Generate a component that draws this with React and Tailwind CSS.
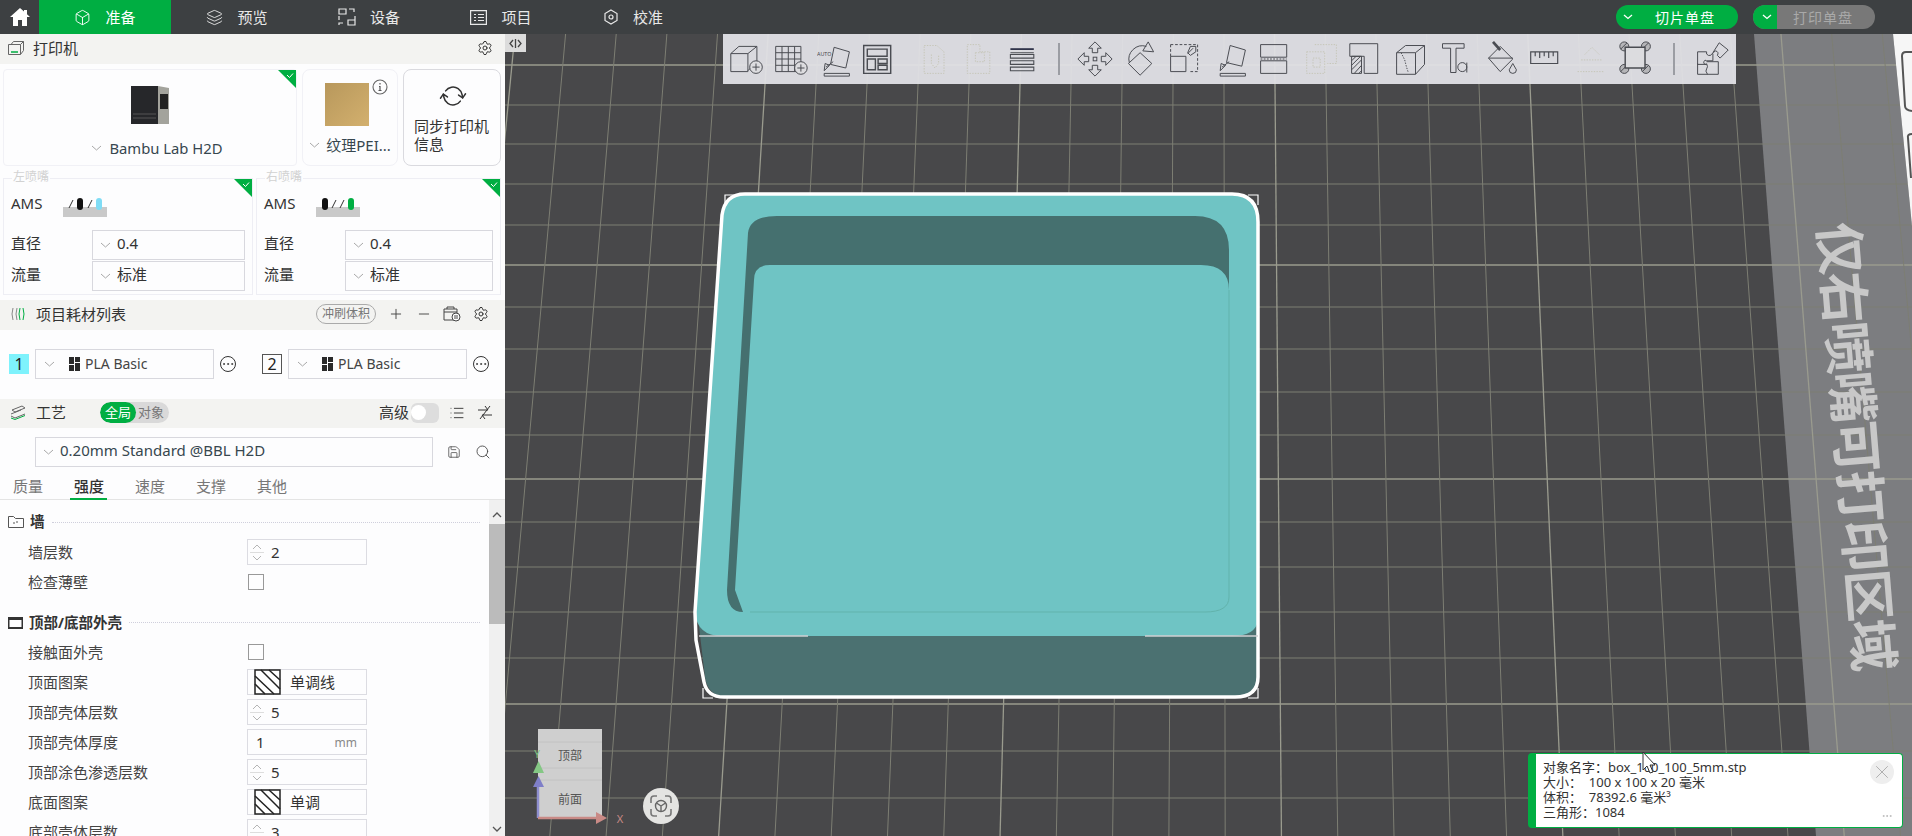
import React from 'react';
import { Box, Layers, Settings, Plus, Minus, Search, Save, RefreshCw, Ellipsis, List, X } from 'lucide-react';

const font = { fontFamily: '"Noto Sans", "Noto Sans CJK SC", sans-serif' };

// grid lines of the build plate, measured from the perspective of the scene
const rowYs = [65, 105, 144, 184, 225, 265, 307, 349, 392, 435, 479, 522, 567, 612, 658, 704, 751, 798];
const colNs = [];
for (let n = -14; n <= 22; n++) colNs.push(n);
const colX = (n, y) => {
  const a = 1020 + 51 * n;
  const b = 1003 + 55.5 * n;
  return a + ((b - a) * (y - 85)) / 640;
};

function Chevron({ className = '' }) {
  return (
    <svg width="11" height="6" viewBox="0 0 11 6" fill="none" className={`shrink-0 ${className}`}>
      <path d="M1 1l4.5 4L10 1" stroke="#a8a8a8" strokeWidth="1" />
    </svg>
  );
}

function Corner() {
  return (
    <svg width="18" height="18" viewBox="0 0 18 18" className="absolute top-0 right-0">
      <path d="M0 0h18v18z" fill="#00ae42" />
      <path d="M9 5l2.5 2.5L15 3.5" stroke="#fff" strokeWidth="1" fill="none" />
    </svg>
  );
}

function Scene() {
  return (
    <svg viewBox="505 34 1407 802" className="absolute inset-0 w-full h-full">
      <rect x="505" y="34" width="1407" height="802" fill="#48484a" />
      <path d="M1754 34L1893 34L1912 226L1912 836L1816 836Z" fill="#7c7d80" />
      {rowYs.map((y, i) => (
        <line key={y} x1="505" x2="1912" y1={y} y2={y} stroke={i % 5 === 0 ? '#9a9b8e' : '#7d7e73'} strokeWidth={i % 5 === 0 ? 1.3 : 1} />
      ))}
      {colNs.map((n) => (
        <line key={n} x1={colX(n, 34)} y1="34" x2={colX(n, 836)} y2="836" stroke={n % 5 === 0 ? '#9a9b8e' : '#7d7e73'} strokeWidth={n % 5 === 0 ? 1.3 : 1} />
      ))}
      <path d="M1893 34L1912 34L1912 226Z" fill="#f6f6f6" />
      <path d="M1912 52h-6q-4 0-4 4l3 50q0 4 7 5" fill="none" stroke="#555" strokeWidth="2" />
      <path d="M1912 134q-5 0-4 4l3 40" fill="none" stroke="#555" strokeWidth="2" />
      <text
        transform="translate(1819 224) rotate(85.3)"
        fontSize="52"
        fontWeight="700"
        fill="#c8c8c8"
        textLength="450"
        style={font}
      >
        仅右喷嘴可打印区域
      </text>

      {/* dark side of the box */}
      <path d="M697 610L705 677Q708 697 728 697L1235 697Q1258 697 1258 677L1258 600L1258 620Z" fill="#4b7171" />
      {/* top face */}
      <path d="M745 195L1232 195Q1258 195 1258 222L1258 620Q1256 636 1232 636L722 636Q697 636 695 612L722 215Q724 195 745 195Z" fill="#6fc4c4" />
      {/* recess */}
      <path d="M777 216L1195 216Q1229 216 1229 250L1229 290Q1229 265 1201 265L770 265Q754 265 754 280L735 590L743 612Q727 612 727 590L748 233Q750 216 777 216Z" fill="#45706f" />
      <path d="M1229 290L1229 597Q1229 612 1205 612L750 612" fill="none" stroke="#62b3ac" strokeWidth="1" />
      <path d="M745 194L1232 194Q1258 194 1258 222L1258 677Q1258 697 1235 697L724 697Q707 697 704 682L696 640L695 612L722 215Q725 194 745 194Z" fill="none" stroke="#fff" strokeWidth="3.5" />
      <path d="M699 636H808M1145 636H1258" stroke="#cfcfd2" strokeWidth="1.5" />
      <path d="M725 205V195H735M1248 195H1258V205M703 688V698H713M1248 698H1258V688" fill="none" stroke="#fff" strokeWidth="1.2" />

      {/* orientation widget */}
      <rect x="538" y="729" width="64" height="89" fill="#cfcfcf" />
      <path d="M538 742H602M538 768H602M538 780H602" stroke="#c2c2c2" />
      <text x="570" y="760" textAnchor="middle" fontSize="12" fill="#555" style={font}>顶部</text>
      <text x="570" y="804" textAnchor="middle" fontSize="12" fill="#555" style={font}>前面</text>
      <path d="M538 818V785" stroke="#8f8fd0" strokeWidth="2.5" />
      <path d="M533 787h11l-5.500-11z" fill="#7f7fc8" />
      <path d="M533 773h11l-5.500-12z" fill="#84c784" />
      <text x="537" y="758" textAnchor="middle" fontSize="10" fill="#84c784" style={font}>Y</text>
      <path d="M538 818H598" stroke="#c98a86" strokeWidth="2.5" />
      <path d="M596 812v12l11-6z" fill="#c98a86" />
      <text x="620" y="823" textAnchor="middle" fontSize="11" fill="#c98a86" style={font}>X</text>
      <circle cx="661" cy="806" r="18" fill="#e4e4e2" />
      <path d="M651 803v-4q0-3 3-3h3M665 796h3q3 0 3 3v4M671 809v4q0 3-3 3h-3M657 816h-3q-3 0-3-3v-4" fill="none" stroke="#777" strokeWidth="1.6" />
      <circle cx="661" cy="806" r="5.500" fill="none" stroke="#666" strokeWidth="1.4" />
      <path d="M661 806v5.500M661 806l-4.500-3M661 806l4.500-3" stroke="#666" strokeWidth="1.4" />
    </svg>
  );
}

const s = { fill: 'none', stroke: '#4a4c52', strokeWidth: 1.1 };
const off = { fill: 'none', stroke: '#c4c4b4', strokeWidth: 1, strokeDasharray: '1.5 1.5' };

const toolIcons = [
  <g {...s}><path d="M2 15h19v20H2zM2 15l9-8h20v17l-10 10M21 15l10-8" /><circle cx="30" cy="30" r="7" fill="#dcdcdf" /><path d="M30 26v8M26 30h8" /></g>,
  <g {...s}><path d="M3 7h28v28H3zM10 7v28M17 7v28M24 7v28M3 14h28M3 21h28M3 28h28" /><circle cx="31" cy="31" r="7" fill="#dcdcdf" /><path d="M31 27v8M27 31h8" /></g>,
  <g {...s}><path d="M19 8l17 5-4 18-17-4z" /><path d="M14 28l-6 6 1-8zM10 30l8-6M8 37h28v3H8z" /><text x="0" y="18" fontSize="6" fill="#45474c" stroke="none" style={font}>AUTO</text></g>,
  <g {...s} strokeWidth="1.6"><path d="M3 6h30v31H3zM7 10h22v8H7zM7 21h9v12H7zM19 21h10v5H19zM19 28h10v5H19z" /></g>,
  <g {...off}><path d="M8 6h14l8 7v24H8zM16 16v10l4 5 4-5V16" /></g>,
  <g {...off}><path d="M7 5h14v8h11v24H7zM16 14h10v10H16z" /></g>,
  <g {...s} strokeWidth="1.2"><path d="M6 10h26" stroke="#30344a" strokeWidth="2" /><path d="M6 14h26M6 16h26v4H6zM6 23h26v4H6zM6 30h26v4H6z" /></g>,
  null,
  <g {...s}><path d="M20 2l7 7h-4v5h-6V9h-4zM20 40l7-7h-4v-5h-6v5h-4zM1 21l7-7v4h5v6H8v4zM39 21l-7-7v4h-5v6h5v4z" /><rect x="18" y="19" width="4" height="4" /></g>,
  <g {...s}><path d="M7 25A15 15 0 0 1 26 7" /><path d="M28 2l6 11-12-1zM19 14l13 12-13 13-13-13z" /></g>,
  <g {...s}><path d="M4 5h30v30H24" strokeDasharray="3 2" /><path d="M4 5v13" strokeDasharray="3 2" /><path d="M4 18h17v17H4zM23 15l6-6M26 7h6v6l-6 4-3-3z" /></g>,
  <g {...s}><path d="M19 6l17 5-4 18-17-4z" /><path d="M14 28l-6 6 1-8zM10 30l8-6M8 37h28v3H8z" /></g>,
  <g {...s}><path d="M4 5h29v14H4zM4 23h29v14H4z" /><path d="M4 21h29" strokeDasharray="2 1.500" /></g>,
  <g {...off}><path d="M12 5h24v21H26M3 13h20v24H3zM10 20h8v10h-8z" /></g>,
  <g {...s}><path d="M2 4H33V37H18V18H2z" /><path d="M4 18h11v19H4zM4 23l5-5M4 28l10-10M4 33l11-11M7 37l8-9M12 37l3-3" /></g>,
  <g {...s}><path d="M4 14h21v24H4zM4 14l10-8h21v21l-10 11M25 14l10-8" /><path d="M9 14l4 8 2 8 2 6" strokeDasharray="1.500 1.500" /></g>,
  <g {...s}><path d="M5 4h24v5H20v27h-6V9H5z" /><circle cx="27" cy="30" r="5" /><path d="M32 25v11" /></g>,
  <g {...s}><path d="M5 20L18 7l14 14-14 14zM5 20h27" /><path d="M10 2l8 9" strokeWidth="3" /><path d="M32 26l4 7a4 4 0 0 1-8 0z" /></g>,
  <g {...s} strokeWidth="1.300"><path d="M3 13h30v13H3zM8 13v5M13 13v7M18 13v5M23 13v7M28 13v5" /></g>,
  <g {...off}><path d="M12 16l8-8 8 8M8 22h24M4 35h30" /></g>,
  <g {...s}><circle cx="7" cy="7" r="5" fill="#b5b5b8" /><circle cx="31" cy="7" r="5" fill="#b5b5b8" /><circle cx="7" cy="32" r="5" fill="#b5b5b8" /><circle cx="31" cy="32" r="5" fill="#b5b5b8" /><path d="M3 10l7-7M27 10l7-7M3 35l7-7M27 35l7-7" /><path d="M8 8h22v23H8z" strokeWidth="1.600" fill="#dcdcdf" /></g>,
  null,
  <g {...s}><path d="M4 13h10q-1 3 2 4t4-2l1 0v8h-7q-2-2-3 1t3 3H4zM14 24h13v14H4V26M14 26q2 4 0 6t1 6" /><path d="M21 14l7-11 10 8-9 9-3-3q2-4-2-5z" /></g>,
];

// margin before each toolbar cell, lined up with the reference
const toolCells = [
  '', '', '', '', 'ml-[12px]', '', '', 'sep', '', 'ml-[2px]', '', 'ml-[2px]', '', 'ml-[3px]', '', 'ml-px', 'ml-px', 'ml-[2px]', '', 'ml-[2px]', '', 'sep2', '',
];

function Toolbar() {
  return (
    <div className="absolute left-[218px] top-0 w-[1013px] h-[50px] bg-[#e2e2e6]/95 flex items-center pl-[2px]">
      {toolIcons.map((icon, i) => {
        const cell = toolCells[i];
        if (cell === 'sep') return <div key={i} className="w-[28px] flex justify-center"><div className="w-[1.500px] h-[32px] bg-[#9b9da3]" /></div>;
        if (cell === 'sep2') return <div key={i} className="w-[32px] flex justify-center"><div className="w-[1.500px] h-[32px] bg-[#9b9da3]" /></div>;
        return (
          <div key={i} className={`w-[44px] flex justify-center ${cell}`}>
            <svg width="36" height="40" viewBox="0 0 40 42">{icon}</svg>
          </div>
        );
      })}
    </div>
  );
}

function TopBar() {
  const tab = 'w-[132px] h-full flex items-center justify-center gap-[14px] text-[15px]';
  return (
    <div className="h-[34px] bg-[#3d4042] flex items-center text-[#e8e8e8] shrink-0" style={font}>
      <div className="w-[39px] flex justify-center">
        <svg width="20" height="20" viewBox="0 0 20 20" fill="#fff"><path d="M10 1L0 10h3v9h5v-6h4v6h5v-9h3l-3-2.700V3h-3v1.600z" /></svg>
      </div>
      <div className={`${tab} bg-[#00ae42] text-white`}><Box size={17} strokeWidth={1.3} />准备</div>
      <div className={tab}><Layers size={17} strokeWidth={1.3} />预览</div>
      <div className={tab}>
        <svg width="18" height="18" viewBox="0 0 18 18" fill="none" stroke="#e8e8e8" strokeWidth="1.2"><path d="M1 1h7v5H1zM1 8v4M1 17v-2h4M11 1h5v3M17 8v9h-7v-5h7" /></svg>
        设备
      </div>
      <div className={tab}>
        <svg width="17" height="15" viewBox="0 0 17 15" fill="none" stroke="#e8e8e8" strokeWidth="1.2"><path d="M.6.6h15.800v13.800H.6zM4 4.500h2M8 4.500h6M4 7.500h2M8 7.500h6M4 10.500h2M8 10.500h6" /></svg>
        项目
      </div>
      <div className={tab}>
        <svg width="16" height="16" viewBox="0 0 16 16" fill="none" stroke="#e8e8e8" strokeWidth="1.2"><path d="M8 1l6 3.500v7L8 15l-6-3.500v-7z" /><circle cx="8" cy="8" r="2" /></svg>
        校准
      </div>
      <div className="ml-auto flex items-center gap-[15px] pr-[37px]">
        <div className="w-[122px] h-[24px] rounded-full bg-[#00ae42] flex items-center text-white text-[14px]">
          <Chevron2 /><span className="ml-[22px] tracking-[1px]">切片单盘</span>
        </div>
        <div className="w-[122px] h-[24px] rounded-full bg-[#787878] flex items-center text-[#a9a9a9] text-[14px] overflow-hidden">
          <div className="w-[24px] h-full bg-[#00ae42] flex items-center pl-[2px]"><Chevron2 /></div>
          <span className="ml-[16px] tracking-[1px]">打印单盘</span>
        </div>
      </div>
    </div>
  );
}

function Chevron2() {
  return (
    <svg width="10" height="6" viewBox="0 0 10 6" fill="none" className="ml-[7px] shrink-0">
      <path d="M1 1l4 3.500L9 1" stroke="#fff" strokeWidth="1.300" />
    </svg>
  );
}

function SelectBox({ children, className = '' }) {
  return (
    <div className={`h-[30px] border border-[#d8d8de] flex items-center pl-[7px] gap-[6px] text-[15px] text-[#333] ${className}`}>
      <Chevron />
      <span className="-mt-[3px]">{children}</span>
    </div>
  );
}

function AmsIcon({ pills, slashes }) {
  return (
    <svg width="44" height="24" viewBox="0 0 44 24" className="shrink-0">
      <rect x="0" y="14" width="44" height="10" fill="#c9c9c9" />
      {pills.map(([x, color]) => (
        <rect key={x} x={x - 3} y="5" width="6" height="12" rx="3" fill={color} />
      ))}
      {slashes.map((x) => (
        <path key={x} d={`M${x - 2} 15l4-8`} stroke="#333" strokeWidth="1" />
      ))}
    </svg>
  );
}

function Nozzle({ title, pills, slashes, className, inputClass }) {
  return (
    <div className={`relative h-[117px] border border-[#eeeef4] px-[7px] ${className}`}>
      <span className="absolute -top-[10px] left-[8px] px-[1px] bg-[#fdfdfe] text-[#d2d2d2] text-[12px] leading-[16px]">{title}</span>
      <Corner />
      <div className="h-[51px] flex items-center text-[15px] text-[#333] gap-[21px]">
        <span className="-mt-[2px]">AMS</span>
        <AmsIcon pills={pills} slashes={slashes} />
      </div>
      <div className="flex items-center text-[15px] text-[#333] justify-between">
        <span className="-mt-[3px]">直径</span>
        <SelectBox className={inputClass}>0.4</SelectBox>
      </div>
      <div className="flex items-center text-[15px] text-[#333] justify-between mt-px">
        <span className="-mt-[3px]">流量</span>
        <SelectBox className={inputClass}>标准</SelectBox>
      </div>
    </div>
  );
}

function Filament({ num, swatch }) {
  return (
    <div className="flex items-center">
      <div className={`w-[20px] h-[20px] flex items-center justify-center text-[16px] text-[#222] ${swatch}`}>{num}</div>
      <div className="ml-[6px] w-[179px] h-[30px] border border-[#d8d8de] flex items-center pl-[8px] gap-[14px] text-[14px] text-[#444]">
        <Chevron />
        <div className="flex items-center gap-[5px]">
          <svg width="11" height="14" viewBox="0 0 11 14" fill="#2a2a2a"><path d="M0 0h5v7H0zM6 0h5v5H6zM0 8h5v6H0zM6 6h5v8H6z" /></svg>
          PLA Basic
        </div>
      </div>
      <Ellipsis size={15} strokeWidth={1.4} className="ml-[6px] w-[16px] h-[16px] border border-[#333] rounded-full text-[#333]" />
    </div>
  );
}

function Spinner({ value }) {
  return (
    <div className="w-[120px] h-[26px] border border-[#dcdce2] flex items-center text-[15px] text-[#333]">
      <div className="w-[14px] ml-[2px] flex flex-col items-center gap-[2px] shrink-0">
        <svg width="10" height="6" viewBox="0 0 10 6" fill="none"><path d="M1 5l4-4 4 4" stroke="#b5b5b5" /></svg>
        <div className="w-[14px] h-px bg-[#dddddd]" />
        <svg width="10" height="6" viewBox="0 0 10 6" fill="none"><path d="M1 1l4 4 4-4" stroke="#b5b5b5" /></svg>
      </div>
      <span className="ml-[7px]">{value}</span>
    </div>
  );
}

function Hatch() {
  return (
    <svg width="27" height="26" viewBox="0 0 27 26" className="ml-[6px] shrink-0">
      <rect x="1" y="1" width="25" height="24" fill="#fff" stroke="#222" strokeWidth="1.500" />
      <path d="M1 7l19 18M1 15l10 10M7 1l19 19M15 1l11 10" stroke="#222" strokeWidth="1.500" />
    </svg>
  );
}

function Pattern({ text }) {
  return (
    <div className="w-[120px] h-[26px] border border-[#dcdce2] flex items-center gap-[9px] text-[15px] text-[#333]">
      <Hatch />
      {text}
    </div>
  );
}

function Check() {
  return <div className="w-[16px] h-[16px] border border-[#999] ml-px" />;
}

function Row({ label, children }) {
  return (
    <div className="h-[30px] flex items-center text-[15px] text-[#444] pl-[28px]">
      <span className="w-[219px]">{label}</span>
      {children}
    </div>
  );
}

function Section({ title, icon, className = '' }) {
  return (
    <div className={`h-[30px] flex items-center pl-[8px] gap-[6px] text-[14.500px] font-bold text-[#333] ${className}`}>
      {icon}
      <span className="shrink-0">{title}</span>
      <div className="flex-1 border-t border-dotted border-[#cfcfdc] ml-[1px] mr-[9px]" />
    </div>
  );
}

function Sidebar() {
  return (
    <div className="w-[505px] h-full bg-[#fdfdfe] flex flex-col shrink-0 overflow-hidden" style={font}>
      <div className="h-[30px] pb-[2px] bg-[#f3f3f1] flex items-center pl-[8px] pr-[12px] gap-[9px] text-[15px] text-[#333] shrink-0">
        <svg width="16" height="14" viewBox="0 0 16 14" fill="none" stroke="#666"><path d="M.5 3.500h12v10H.5zM3 3.500L5.500.5h10v9l-3 4M12.500 3.500l3-3" /><path d="M3 11h7" stroke="#00ae42" strokeWidth="1.500" /></svg>
        打印机
        <Settings size={16} strokeWidth={1.5} className="ml-auto text-[#333]" />
      </div>

      <div className="mt-[5px] px-[3px] flex gap-[5px] h-[97px] shrink-0">
        <div className="relative w-[294px] border border-[#f1f1f6] rounded-[4px] flex flex-col items-center">
          <Corner />
          <svg width="38" height="41" viewBox="0 0 38 41" className="mt-[14px]">
            <path d="M0 2h27v38H0z" fill="#26272a" />
            <path d="M2 30h23M2 34h23" stroke="#555" strokeWidth="1" />
            <path d="M27 2l11 2v36H27z" fill="#a3a39c" />
            <rect x="29" y="10" width="8" height="15" fill="#222" />
          </svg>
          <div className="mt-[12px] flex items-center gap-[7px] text-[14.800px] text-[#37474f] ml-[14px]">
            <Chevron />
            Bambu Lab H2D
          </div>
        </div>
        <div className="relative w-[96px] border border-[#f1f1f6] rounded-[8px] flex flex-col items-center">
          <div className="mt-[13px] ml-[-6px] w-[44px] h-[43px] bg-gradient-to-br from-[#b8985c] to-[#d3b06e]" />
          <svg width="16" height="16" viewBox="0 0 16 16" fill="none" className="absolute right-[9px] top-[9px]">
            <circle cx="8" cy="8" r="7" stroke="#666" strokeWidth="1.100" />
            <path d="M8 4v1.500M7 7.500h1V11.500M6.500 11.500h3" stroke="#555" strokeWidth="1.200" />
          </svg>
          <div className="mt-[8px] flex items-center gap-[6px] text-[15px] text-[#37474f]">
            <Chevron />
            纹理PEI...
          </div>
        </div>
        <div className="w-[98px] border border-[#dadadf] rounded-[8px] pl-[10px]">
          <RefreshCw size={24} strokeWidth={1.500} className="text-[#333] mt-[14px] ml-[27px] rotate-[35deg]" />
          <div className="mt-[9px] text-[15px] leading-[18px] text-[#333]">同步打印机<br />信息</div>
        </div>
      </div>

      <div className="mt-[12px] px-[3px] flex gap-[3px] shrink-0">
        <Nozzle title="左喷嘴" pills={[[17, '#111'], [36, '#7fdcf5']]} slashes={[8, 27]} className="w-[250px]" inputClass="w-[153px]" />
        <Nozzle title="右喷嘴" pills={[[9, '#111'], [35, '#00ae42']]} slashes={[18, 26]} className="w-[245px]" inputClass="w-[148px]" />
      </div>

      <div className="mt-[5px] h-[30px] pb-[2px] bg-[#f3f3f1] flex items-center pl-[10px] text-[15px] text-[#333] shrink-0">
        <svg width="15" height="14" viewBox="0 0 15 14" fill="none" stroke="#888"><path d="M3 1q-2 6 0 12M7 1q-2 6 0 12" /><path d="M10 1q-2 6 0 12M13 1q2 6 0 12" stroke="#00ae42" /></svg>
        <span className="ml-[11px]">项目耗材列表</span>
        <div className="ml-[190px] w-[60px] h-[20px] border border-[#aaaaaa] rounded-full text-[12px] text-[#777] flex items-center justify-center">冲刷体积</div>
        <Plus size={16} strokeWidth={1.400} className="ml-[12px] text-[#444]" />
        <Minus size={16} strokeWidth={1.400} className="ml-[12px] text-[#444]" />
        <svg width="18" height="16" viewBox="0 0 18 16" fill="none" stroke="#444" className="ml-[11px]"><path d="M1 3h13v11H1zM1 6h13M4 3V1h7v2" /><circle cx="13" cy="11" r="4" fill="#fff" /><path d="M11 10h4M11 12h4" /></svg>
        <Settings size={16} strokeWidth={1.500} className="ml-[12px] text-[#333]" />
      </div>

      <div className="h-[69px] pb-[2px] pl-[9px] flex items-center gap-[26px] shrink-0">
        <Filament num="1" swatch="bg-[#7ef2fc]" />
        <Filament num="2" swatch="border border-[#555]" />
      </div>

      <div className="h-[29px] pb-[2px] bg-[#f3f3f1] flex items-center pl-[10px] text-[15px] text-[#333] shrink-0">
        <svg width="16" height="15" viewBox="0 0 16 15" fill="none" stroke="#666"><path d="M2 5l10-4 3 2-10 4zM1 9l10-4M1 11l4 2 10-4" /><path d="M1 13l4 1.500 10-4" stroke="#00ae42" /></svg>
        <span className="ml-[10px]">工艺</span>
        <div className="ml-[34px] w-[69px] h-[21px] rounded-full bg-[#d9d9d9] flex items-center text-[13px] overflow-hidden">
          <div className="w-[36px] h-full rounded-full bg-[#00ae42] text-white flex items-center justify-center">全局</div>
          <div className="pl-[2px] text-[#777]">对象</div>
        </div>
        <span className="ml-[210px]">高级</span>
        <div className="ml-[2px] w-[28px] h-[20px] rounded-[6px] bg-[#dddddd] flex items-center">
          <div className="w-[15px] h-[15px] rounded-full bg-white" />
        </div>
        <List size={16} strokeWidth={1.400} className="ml-[10px] text-[#333]" />
        <svg width="16" height="15" viewBox="0 0 16 15" fill="none" stroke="#333" className="ml-[12px]"><path d="M1 5h10L8 1M15 10H5l3 4M3 14L13 1" /></svg>
      </div>

      <div className="h-[39px] pl-[35px] pt-[9px] flex items-start shrink-0">
        <SelectBox className="w-[398px] !text-[#37474f]">0.20mm Standard @BBL H2D</SelectBox>
        <Save size={14} strokeWidth={1.300} className="ml-[14px] mt-[8px] text-[#444]" />
        <Search size={16} strokeWidth={1.300} className="ml-[14px] mt-[7px] text-[#444]" />
      </div>

      <div className="h-[33px] border-b border-[#e4e4e4] flex text-[15px] text-[#777] pl-[13px] gap-[31px] shrink-0">
        <div className="pt-[8px]">质量</div>
        <div className="relative pt-[8px] font-medium text-[#333]">强度<div className="absolute left-[-4px] right-[-3px] -bottom-px h-[2px] bg-[#00ae42]" /></div>
        <div className="pt-[8px]">速度</div>
        <div className="pt-[8px]">支撑</div>
        <div className="pt-[8px]">其他</div>
      </div>

      <div className="flex-1 flex min-h-0">
        <div className="flex-1 pt-[7px]">
          <Section title="墙" icon={<svg width="16" height="14" viewBox="0 0 16 14" fill="none" stroke="#555"><path d="M.5 1.500l5 0 2 2h8v9H.5zM5 8h2M8 7h2" /></svg>} />
          <Row label="墙层数"><Spinner value="2" /></Row>
          <Row label="检查薄壁"><Check /></Row>
          <Section title="顶部/底部外壳" className="mt-[11px] !h-[29px]" icon={<svg width="15" height="14" viewBox="0 0 15 14" fill="#333"><path d="M0 1h15v12H0zM1.500 4v7h12V4z" /></svg>} />
          <Row label="接触面外壳"><Check /></Row>
          <Row label="顶面图案"><Pattern text="单调线" /></Row>
          <Row label="顶部壳体层数"><Spinner value="5" /></Row>
          <Row label="顶部壳体厚度">
            <div className="w-[120px] h-[26px] border border-[#dcdce2] flex items-center pl-[8px] pr-[9px] text-[15px] text-[#333] justify-between">
              1<span className="text-[12px] text-[#888] mt-[2px]">mm</span>
            </div>
          </Row>
          <Row label="顶部涂色渗透层数"><Spinner value="5" /></Row>
          <Row label="底面图案"><Pattern text="单调" /></Row>
          <Row label="底部壳体层数"><Spinner value="3" /></Row>
        </div>
        <div className="w-[16px] bg-[#f0f0f0] flex flex-col items-center">
          <svg width="10" height="6" viewBox="0 0 10 6" fill="none" className="mt-[12px]"><path d="M1 5l4-4 4 4" stroke="#555" strokeWidth="1.300" /></svg>
          <div className="w-full h-[100px] bg-[#bbbbbb] mt-[6px]" />
          <svg width="10" height="6" viewBox="0 0 10 6" fill="none" className="mt-auto mb-[4px]"><path d="M1 1l4 4 4-4" stroke="#555" strokeWidth="1.300" /></svg>
        </div>
      </div>
    </div>
  );
}

function Notice() {
  return (
    <div className="absolute left-[1023px] top-[719px] w-[375px] h-[75px] bg-white border border-[#00ae42] border-l-[8px] rounded-[4px] pl-[7px] pt-[6px] text-[13px] leading-[15px] text-[#333] whitespace-pre" style={font}>
      <div>对象名字：box_100_100_5mm.stp</div>
      <div>大小：  100 x 100 x 20 毫米</div>
      <div>体积：  78392.6 毫米³</div>
      <div>三角形：1084</div>
      <div className="absolute right-[8px] top-[6px] w-[24px] h-[24px] rounded-full bg-[#eeeeee] flex items-center justify-center">
        <X size={22} strokeWidth={1} className="text-[#aaaaaa]" />
      </div>
      <Ellipsis size={12} className="absolute right-[9px] bottom-[5px] text-[#bbbbbb]" />
    </div>
  );
}

export default function App() {
  return (
    <div className="w-[1912px] h-[836px] overflow-hidden flex flex-col">
      <TopBar />
      <div className="flex-1 flex min-h-0">
        <Sidebar />
        <div className="relative flex-1 overflow-hidden">
          <Scene />
          <div className="absolute left-0 top-0 w-[21px] h-[18px] bg-[#dcdcdc] flex items-center justify-center">
            <svg width="13" height="11" viewBox="0 0 13 11" fill="none" stroke="#444" strokeWidth="1.300"><path d="M4 2L1 5.500 4 9M9 2l3 3.500L9 9M6.500 1v9" /></svg>
          </div>
          <Toolbar />
          <Notice />
          <svg width="14" height="24" viewBox="0 0 14 24" className="absolute left-[1137px] top-[717px]">
            <path d="M1 1v18l4-4 3 7 3-1-3-7h5z" fill="#fff" stroke="#333" />
          </svg>
        </div>
      </div>
    </div>
  );
}
